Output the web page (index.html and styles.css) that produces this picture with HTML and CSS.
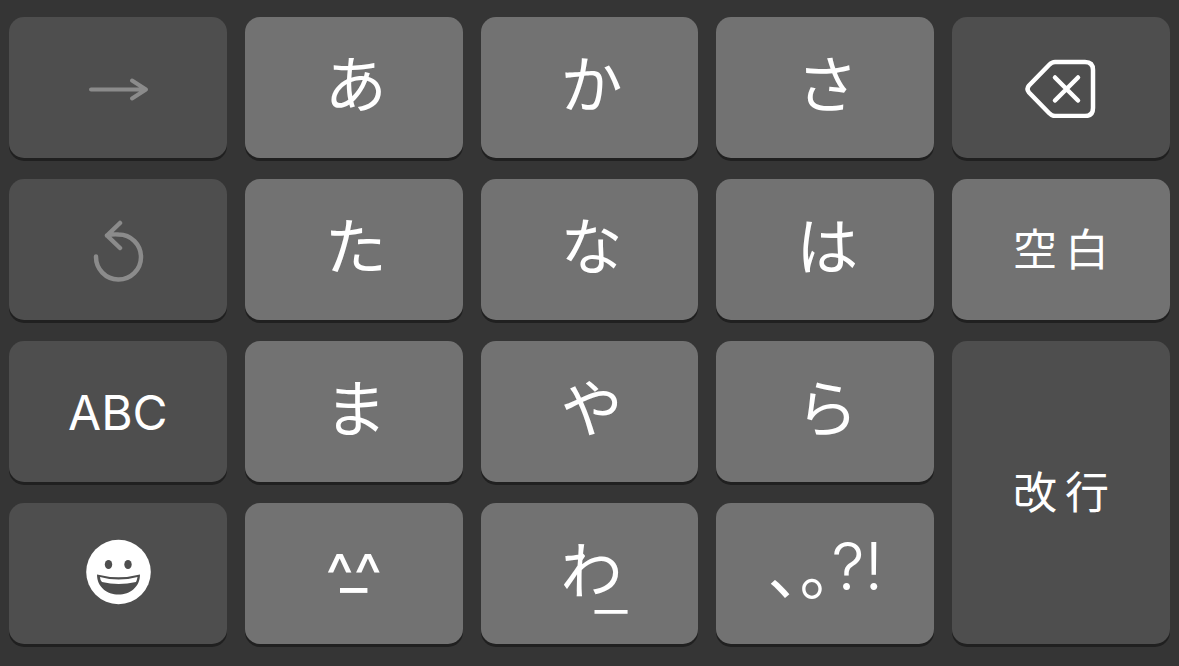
FILE: index.html
```html
<!DOCTYPE html>
<html lang="ja">
<head>
	<meta charset="UTF-8">
	<meta name="viewport" content="width=device-width, initial-scale=1">
	<title>かな入力キーボード</title>
	<link rel="stylesheet" href="styles.css">
</head>

<body>

<main class="keyboard">
	<button type="button" class="key dark dim" aria-label="次へ">
		<svg width="64" height="40" viewBox="0 0 64 40" class="line-icon">
			<path d="M5 21.500H60M46 12.500L60 21.500L46 30.500"/>
		</svg>
	</button>
	<button type="button" class="key kana">あ</button>
	<button type="button" class="key kana">か</button>
	<button type="button" class="key kana">さ</button>
	<button type="button" class="key dark" aria-label="削除">
		<svg width="72" height="60" viewBox="0 0 72 60" class="line-icon bold">
			<path d="M30 4H60Q68 4 68 12V50Q68 58 60 58H30Q27 58 24 55L4 34.500Q1 31 4 27.500L24 7Q27 4 30 4Z"/>
			<path d="M30 19.500L53 42.500M53 19.500L30 42.500"/>
		</svg>
	</button>

	<button type="button" class="key dark dim" aria-label="元に戻す">
		<svg width="52" height="64" viewBox="0 0 52 64" class="line-icon bold">
			<path d="M4 38.500A22.500 22.500 0 1 0 26.500 16.500Q20 16 15 17.500M28 5L15 17.500L28 30"/>
		</svg>
	</button>
	<button type="button" class="key kana">た</button>
	<button type="button" class="key kana">な</button>
	<button type="button" class="key kana">は</button>
	<button type="button" class="key word"><span>空</span><span>白</span></button>

	<button type="button" class="key dark latin">ABC</button>
	<button type="button" class="key kana">ま</button>
	<button type="button" class="key kana">や</button>
	<button type="button" class="key kana">ら</button>
	<button type="button" class="key dark word enter"><span>改</span><span>行</span></button>

	<button type="button" class="key dark emoji" aria-label="絵文字">
		<svg width="66" height="66" viewBox="0 0 66 66">
			<circle cx="33.500" cy="33" r="32.3" fill="#fff"/>
			<ellipse cx="23.500" cy="25.500" rx="3.7" ry="4.6" fill="#4e4e4e"/>
			<ellipse cx="43" cy="25.500" rx="3.7" ry="4.6" fill="#4e4e4e"/>
			<path d="M12 35.500Q33.500 41 55 35.500C55 48 45 55.500 33.500 55.500S12 48 12 35.500Z" fill="#4e4e4e"/>
			<path d="M15 38Q33.500 43 52.500 38Q52 41 51 43Q33.500 47 17 43Q15 41 15 38Z" fill="#fff"/>
		</svg>
	</button>
	<button type="button" class="key face"><span class="eyes">^^</span><span class="mouth">_</span></button>
	<button type="button" class="key kana"><span class="wa">わ<span class="bar">_</span></span></button>
	<button type="button" class="key marks">、。<span class="light">?!</span></button>
</main>

</body>
</html>
```
FILE: styles.css
```css
* {
	box-sizing: border-box;
}

body {
	margin: 0;
	background: #353535;
}

.keyboard {
	display: grid;
	grid-template-columns: repeat(5, 1fr);
	grid-auto-rows: 1fr;
	gap: 21px 18px;
	min-height: 100vh;
	padding: 17px 9px 22px;
}

.key {
	display: flex;
	align-items: center;
	justify-content: center;
	min-width: 0;
	padding: 0;
	border: 0;
	border-radius: 15px;
	background: #727272;
	box-shadow: 0 3px 0 #202020;
	color: #fff;
	font-family: Inter, "Noto Sans CJK JP", sans-serif;
	cursor: pointer;
}

.dark {
	background: #4e4e4e;
}

.dim {
	color: #8b8b8b;
}

.line-icon {
	fill: none;
	stroke: currentColor;
	stroke-width: 4;
	stroke-linecap: round;
	stroke-linejoin: round;
}

.bold {
	stroke-width: 4.5;
}

.kana {
	padding: 0 0 14px 4px;
	font-family: "Noto Sans CJK JP", sans-serif;
	font-size: 62px;
	line-height: 80px;
}

.word {
	gap: 8px;
	padding-bottom: 6px;
	font-size: 44px;
}

.latin {
	padding-top: 2px;
	font-size: 48px;
}

.enter {
	grid-row: span 2;
}

.emoji {
	padding-bottom: 4px;
}

/* ^^ over a short underscore */
.face {
	flex-direction: column;
	padding-bottom: 8px;
	font-size: 60px;
	line-height: 8px;
}

.mouth {
	margin-top: -16px;
}

.wa {
	position: relative;
}

.bar {
	position: absolute;
	right: -6px;
	bottom: -11px;
}

.marks {
	padding-bottom: 16px;
	font-size: 64px;
	font-feature-settings: "halt";
}

.light {
	font-size: 66px;
	font-weight: 300;
}
```
